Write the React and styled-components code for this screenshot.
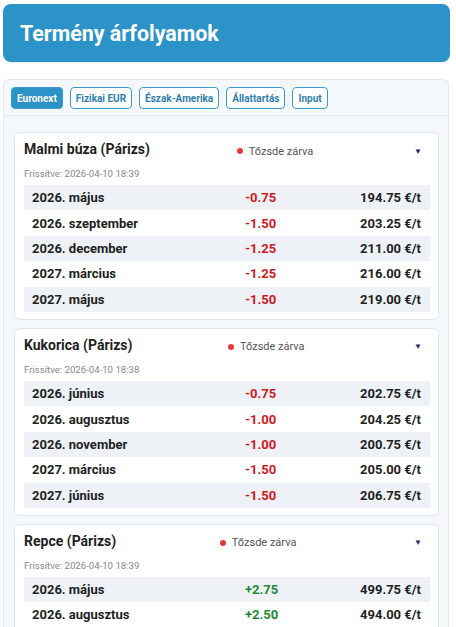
import React from "react";
import styled, { createGlobalStyle } from "styled-components";

const Global = createGlobalStyle`
  html, body { margin: 0; padding: 0; background: #ffffff; }
  body { font-family: Roboto, "Noto Sans", Arial, sans-serif; color: #222; }
  * { box-sizing: border-box; }
`;

const Page = styled.div`
  padding: 4px 6px 0 3px;
`;

const Header = styled.header`
  background: #2b93c8;
  border-radius: 8px;
  height: 58px;
  display: flex;
  align-items: center;
  padding: 0 17px;
  box-shadow: 0 1px 2px rgba(0,0,0,0.08);
`;

const Title = styled.h1`
  margin: 0;
  color: #fff;
  font-size: 21.4px;
  font-weight: 700;
`;

const Panel = styled.section`
  margin-top: 17px;
  margin-right: 1px;
  background: #f5f8fb;
  border: 1px solid #e3e8ee;
  border-bottom: none;
  border-radius: 6px 6px 0 0;
`;

const Tabs = styled.nav`
  display: flex;
  gap: 7px;
  padding: 7px 7px 6px;
  border-bottom: 1px solid #e6ebf0;
`;

const Tab = styled.button`
  font-family: Roboto, Arial, sans-serif;
  font-size: 10px;
  font-weight: 700;
  height: 22px;
  padding: 0 5px;
  border-radius: 4px;
  border: 1px solid #3a9bd0;
  background: ${(p) => (p.$active ? "#2b93c8" : "#ffffff")};
  color: ${(p) => (p.$active ? "#ffffff" : "#2f7fae")};
  cursor: pointer;
`;

const Cards = styled.div`
  display: flex;
  flex-direction: column;
  gap: 8px;
  padding: 16px 9px 0 10px;
`;

const Card = styled.article`
  background: #fff;
  border: 1px solid #e1e6eb;
  border-radius: 6px;
  padding: 7px 8px 7px 9px;
`;

const CardHead = styled.div`
  display: flex;
  align-items: center;
  height: 18px;
`;

const CardTitle = styled.h2`
  margin: 0;
  font-size: 14px;
  font-weight: 700;
  color: #1f1f1f;
  white-space: nowrap;
`;

const Status = styled.div`
  flex: 1;
  display: flex;
  justify-content: center;
  align-items: center;
  gap: 6px;
  font-size: 11px;
  color: #555;
  padding-top: 4px;
  padding-right: 14px;
`;

const Dot = styled.span`
  width: 6px;
  height: 6px;
  border-radius: 50%;
  background: #e5393b;
`;

const Toggle = styled.span`
  font-size: 8px;
  color: #1b2d5c;
  padding-top: 4px;
  margin-right: 8px;
`;

const Updated = styled.div`
  font-size: 9.6px;
  color: #888;
  margin: 10px 0 6px;
`;

const Table = styled.div`
  display: flex;
  flex-direction: column;
`;

const Row = styled.div`
  display: grid;
  grid-template-columns: 213px 1fr auto;
  align-items: center;
  height: 25.4px;
  padding: 0 9px 0 8px;
  background: ${(p) => (p.$alt ? "#eef2f6" : "#fff")};
  font-size: 13px;
  font-weight: 700;
`;

const Label = styled.span`
  color: #222;
`;

const Change = styled.span`
  color: ${(p) => (p.$up ? "#1e8a36" : "#d0191f")};
`;

const Price = styled.span`
  color: #222;
  text-align: right;
`;

const tabs = ["Euronext", "Fizikai EUR", "Észak-Amerika", "Állattartás", "Input"];

const data = [
  {
    name: "Malmi búza (Párizs)",
    updated: "2026-04-10 18:39",
    rows: [
      ["2026. május", "-0.75", "194.75 €/t"],
      ["2026. szeptember", "-1.50", "203.25 €/t"],
      ["2026. december", "-1.25", "211.00 €/t"],
      ["2027. március", "-1.25", "216.00 €/t"],
      ["2027. május", "-1.50", "219.00 €/t"],
    ],
  },
  {
    name: "Kukorica (Párizs)",
    updated: "2026-04-10 18:38",
    rows: [
      ["2026. június", "-0.75", "202.75 €/t"],
      ["2026. augusztus", "-1.00", "204.25 €/t"],
      ["2026. november", "-1.00", "200.75 €/t"],
      ["2027. március", "-1.50", "205.00 €/t"],
      ["2027. június", "-1.50", "206.75 €/t"],
    ],
  },
  {
    name: "Repce (Párizs)",
    updated: "2026-04-10 18:39",
    rows: [
      ["2026. május", "+2.75", "499.75 €/t"],
      ["2026. augusztus", "+2.50", "494.00 €/t"],
    ],
  },
];

export default function App() {
  return (
    <Page>
      <Global />
      <Header>
        <Title>Termény árfolyamok</Title>
      </Header>
      <Panel>
        <Tabs>
          {tabs.map((t, i) => (
            <Tab key={t} $active={i === 0}>{t}</Tab>
          ))}
        </Tabs>
        <Cards>
          {data.map((c) => (
            <Card key={c.name}>
              <CardHead>
                <CardTitle>{c.name}</CardTitle>
                <Status>
                  <Dot />
                  Tőzsde zárva
                </Status>
                <Toggle>▼</Toggle>
              </CardHead>
              <Updated>Frissítve: {c.updated}</Updated>
              <Table>
                {c.rows.map((r, i) => (
                  <Row key={r[0]} $alt={i % 2 === 0}>
                    <Label>{r[0]}</Label>
                    <Change $up={r[1].startsWith("+")}>{r[1]}</Change>
                    <Price>{r[2]}</Price>
                  </Row>
                ))}
              </Table>
            </Card>
          ))}
        </Cards>
      </Panel>
    </Page>
  );
}
